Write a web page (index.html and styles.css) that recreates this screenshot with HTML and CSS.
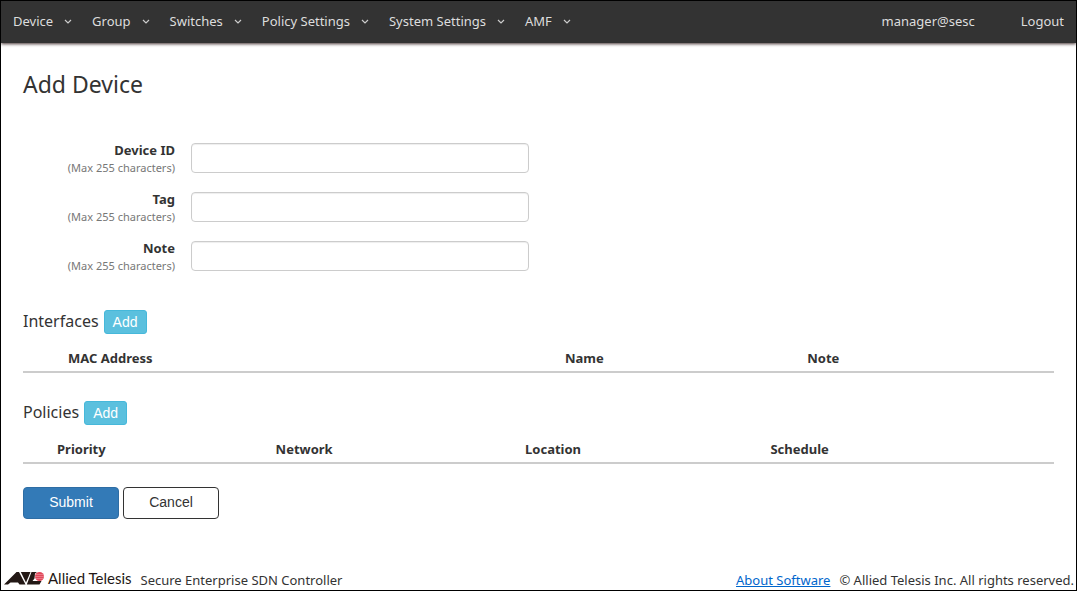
FILE: index.html
```html
<!DOCTYPE html>
<html lang="en">
<head>
    <meta charset="UTF-8">
    <meta name="viewport" content="width=device-width, initial-scale=1.0">
    <title>Add Device</title>
    <link rel="stylesheet" href="styles.css">
</head>
<body>
    <nav class="navbar">
        <ul class="menu">
            <li><a href="#">Device <svg class="caret" viewBox="0 0 8 5"><path d="M1 1l3 3 3-3"/></svg></a></li>
            <li><a href="#">Group <svg class="caret" viewBox="0 0 8 5"><path d="M1 1l3 3 3-3"/></svg></a></li>
            <li><a href="#">Switches <svg class="caret" viewBox="0 0 8 5"><path d="M1 1l3 3 3-3"/></svg></a></li>
            <li><a href="#">Policy Settings <svg class="caret" viewBox="0 0 8 5"><path d="M1 1l3 3 3-3"/></svg></a></li>
            <li><a href="#">System Settings <svg class="caret" viewBox="0 0 8 5"><path d="M1 1l3 3 3-3"/></svg></a></li>
            <li><a href="#">AMF <svg class="caret" viewBox="0 0 8 5"><path d="M1 1l3 3 3-3"/></svg></a></li>
        </ul>
        <ul class="menu user-menu">
            <li><a href="#">manager@sesc</a></li>
            <li><a href="#">Logout</a></li>
        </ul>
    </nav>

    <main class="content">
        <h1>Add Device</h1>
        <form>
            <div class="fields">
                <div class="field">
                    <label for="deviceId">Device ID <small>(Max 255 characters)</small></label>
                    <input type="text" id="deviceId" name="deviceId" maxlength="255">
                </div>
                <div class="field">
                    <label for="tag">Tag <small>(Max 255 characters)</small></label>
                    <input type="text" id="tag" name="tag" maxlength="255">
                </div>
                <div class="field">
                    <label for="note">Note <small>(Max 255 characters)</small></label>
                    <input type="text" id="note" name="note" maxlength="255">
                </div>
            </div>

            <section class="list">
                <div class="list-title">
                    <h2>Interfaces</h2>
                    <button type="button" class="btn btn-add">Add</button>
                </div>
                <table class="interfaces">
                    <thead>
                        <tr><th class="mac">MAC Address</th><th class="name">Name</th><th>Note</th></tr>
                    </thead>
                </table>
            </section>

            <section class="list">
                <div class="list-title">
                    <h2>Policies</h2>
                    <button type="button" class="btn btn-add">Add</button>
                </div>
                <table class="policies">
                    <thead>
                        <tr><th class="priority">Priority</th><th class="network">Network</th><th class="location">Location</th><th>Schedule</th></tr>
                    </thead>
                </table>
            </section>

            <div class="actions">
                <button type="submit" class="btn btn-submit">Submit</button>
                <button type="button" class="btn btn-cancel">Cancel</button>
            </div>
        </form>
    </main>

    <footer class="footer">
        <div class="brand">
            <svg class="mark" viewBox="0 0 40 14">
                <path class="ink" d="M0 13.500L12.500 1H15l6.500 12.500h-6L14 11.500H6.500l-2.500 2z"/>
                <path class="ink" d="M16.800 1H26.500l-4.500 10.500z"/>
                <path class="ink" d="M27.500 1h5.500l-2 1.500-.5 5-2 2.500h9l-2 3.500H22.800z"/>
                <circle class="ball" cx="35.500" cy="5.500" r="4.500"/>
                <path class="stripe" d="M31 3.500h9M31 5.500h9M31 7.500h9"/>
            </svg>
            <span class="brand-name">Allied Telesis</span>
        </div>
        <span class="product">Secure Enterprise SDN Controller</span>
        <div class="legal">
            <a href="#">About Software</a>
            <span>© Allied Telesis Inc. All rights reserved.</span>
        </div>
    </footer>
</body>
</html>
```

FILE: styles.css
```css
* {
    box-sizing: border-box;
}
body {
    margin: 0;
    min-height: 100vh;
    display: flex;
    flex-direction: column;
    border: 1px solid #000;
    background-color: #fff;
    color: #333;
    font-family: "Noto Sans", "Open Sans", sans-serif;
    font-size: 13px;
    line-height: 18px;
}
.navbar {
    display: flex;
    justify-content: space-between;
    height: 42px;
    padding: 0 12px 2px;
    background-color: #333;
    box-shadow: 0 1px 3px #433;
}
.menu {
    display: flex;
    align-items: center;
    gap: 20px;
    margin: 0;
    padding: 0;
    list-style: none;
}
.user-menu {
    gap: 46px;
}
.menu a {
    display: flex;
    align-items: center;
    gap: 11px;
    color: #ddd;
    text-decoration: none;
}
.caret {
    width: 8px;
    height: 5px;
    fill: none;
    stroke: #ccc;
    stroke-width: 1.2;
}
.content {
    flex: 1;
    padding: 27px 22px 0;
}
h1 {
    margin: 0 0 44px;
    font-size: 23px;
    font-weight: 400;
    line-height: 28px;
}
.fields {
    display: grid;
    gap: 13px;
    margin-bottom: 34px;
}
.field {
    display: flex;
    align-items: flex-end;
    gap: 16px;
}
.field label {
    width: 152px;
    font-weight: 700;
    text-align: right;
    line-height: 16px;
}
.field small {
    display: block;
    color: #777;
    font-size: 11px;
    font-weight: 400;
    line-height: 20px;
}
.field input {
    width: 338px;
    height: 30px;
    margin-bottom: 5px;
    padding: 4px 8px;
    border: 1px solid #ccc;
    border-radius: 4px;
    box-shadow: inset 0 1px 1px #eee;
    font: inherit;
}
.list + .list {
    margin-top: 28px;
}
.list-title {
    display: flex;
    gap: 5px;
}
h2 {
    margin: 0;
    font-size: 16px;
    font-weight: 400;
    line-height: 22px;
}
.btn {
    border: 1px solid;
    border-radius: 4px;
    font-family: "Liberation Sans", Arial, sans-serif;
    font-size: 14px;
}
.btn-add {
    height: 24px;
    padding: 0 8px;
    border-color: #46b8da;
    border-radius: 3px;
    background-color: #5bc0de;
    color: #fff;
}
table {
    width: 100%;
    border-collapse: collapse;
    table-layout: fixed;
}
th {
    padding: 15px 0 4px 45px;
    border-bottom: 2px solid #ccc;
    text-align: left;
}
.policies th {
    padding-left: 34px;
}
.mac {
    width: 48.2%;
}
.name {
    width: 23.5%;
}
.priority {
    width: 21.2%;
}
.network {
    width: 24.2%;
}
.location {
    width: 23.8%;
}
.actions {
    display: flex;
    gap: 4px;
    margin-top: 23px;
}
.actions .btn {
    width: 96px;
    height: 32px;
    padding-bottom: 3px;
}
.btn-submit {
    border-color: #2e6da4;
    background-color: #337ab7;
    color: #fff;
}
.btn-cancel {
    border-color: #333;
    background-color: #fff;
    color: #333;
}
.footer {
    display: flex;
    align-items: flex-end;
    gap: 9px;
    padding: 0 2px 1px 3px;
}
.brand {
    display: flex;
    align-items: center;
    gap: 4px;
    height: 23px;
}
.mark {
    width: 40px;
    height: 14px;
}
.ink {
    fill: #231815;
}
.ball {
    fill: #e0475a;
}
.stripe {
    stroke: #f4a6ae;
    stroke-width: 0.5;
}
.brand-name {
    color: #231815;
    font-family: Lato, sans-serif;
    font-size: 15px;
}
.legal {
    display: flex;
    gap: 9px;
    margin-left: auto;
}
.legal a {
    color: #06c;
}
```
